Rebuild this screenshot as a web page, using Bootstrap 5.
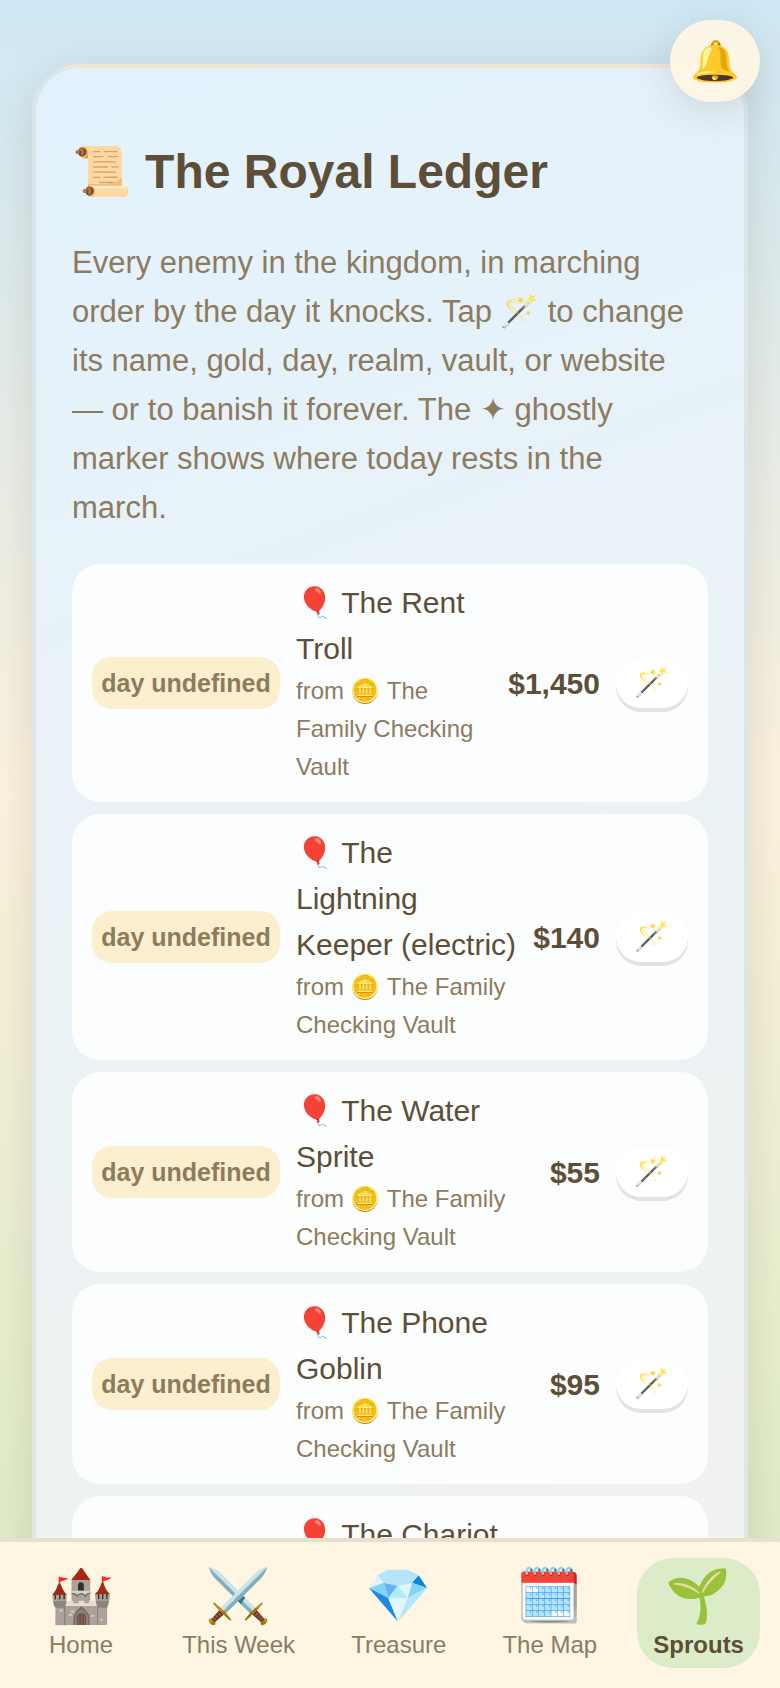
<!DOCTYPE html>
<html lang="en">
<head>
<meta charset="utf-8">
<meta name="viewport" content="width=device-width, initial-scale=1">
<title>The Royal Ledger</title>
<link rel="stylesheet" href="https://cdn.jsdelivr.net/npm/bootstrap@5.3.0/dist/css/bootstrap.min.css">
<style>
:root { --ink: #5d4e37; --ink-soft: #8d7b5f; }
html, body { height: 100%; }
body {
  font-family: "Liberation Sans", "Noto Color Emoji", sans-serif;
  font-size: 30px;
  color: var(--ink);
  background: linear-gradient(180deg, #cfe8f5 0%, #fdf3df 47%, #daecc3 100%) fixed;
}
.realm { height: 100vh; overflow-y: auto; scrollbar-width: none; padding: 64px 32px 180px; }
.realm::-webkit-scrollbar { display: none; }
.ledger {
  min-height: 200vh;
  padding: 66px 36px 36px;
  border: 4px solid rgba(93, 78, 55, .08);
  border-radius: 48px;
  background: linear-gradient(160deg, #e3f2fd, #fff3e0);
  box-shadow: 0 12px 48px rgba(93, 78, 55, .18);
}
.ledger h1 { font-size: 48px; font-weight: 700; line-height: 76px; margin: 0 0 28px; }
.ledger .intro { font-size: 31px; line-height: 49px; color: var(--ink-soft); margin: 0 0 32px; }
.foe-list { gap: 12px; }
.foe { padding: 16px 20px; border-radius: 28px; background: rgba(255, 255, 255, .82); }
.day-tag { min-width: 188px; padding: 0 8px; border-radius: 20px; background: #fbefce; color: var(--ink-soft); font-size: 25px; font-weight: 700; line-height: 52px; white-space: nowrap; text-align: center; }
.foe-name { line-height: 46px; }
.vault { font-size: 24px; line-height: 38px; color: var(--ink-soft); }
.wand { width: 72px; height: 50px; border: 0; border-radius: 28px; background: #fff; box-shadow: 0 4px 0 rgba(0, 0, 0, .1); font-size: 28px; line-height: 50px; padding: 0; text-align: center; }
.bell { top: 20px; right: 20px; width: 90px; height: 82px; border: 0; border-radius: 41px; background: rgba(255, 246, 227, .9); box-shadow: 0 8px 40px rgba(93, 78, 55, .18); font-size: 40px; line-height: 80px; padding: 0; z-index: 20; }
.dock { padding: 16px 20px 20px; border-top: 4px solid #e8dfcc; background: #fef5e2; z-index: 10; }
.dock a { min-width: 122px; height: 110px; padding: 8px 16px; border-radius: 36px; color: var(--ink-soft); font-size: 24px; line-height: 38px; text-decoration: none; text-align: center; }
.dock a.active { background: #dcecc8; color: var(--ink); font-weight: 700; }
.dock .glyph { font-size: 53px; line-height: 60px; font-weight: 400; }
</style>
</head>
<body>
<button type="button" class="bell position-fixed" aria-label="Notifications">🔔</button>

<main class="realm">
  <section class="ledger">
    <h1>📜 The Royal Ledger</h1>
    <p class="intro pe-3">Every enemy in the kingdom, in marching order by the day it knocks. Tap 🪄 to change its name, gold, day, realm, vault, or website — or to banish it forever. The ✦ ghostly marker shows where today rests in the march.</p>
    <ul class="foe-list list-unstyled d-grid mb-0">
      <li class="foe d-flex align-items-center gap-3">
        <span class="day-tag">day undefined</span>
        <div class="flex-grow-1"><div class="foe-name">🎈 The Rent Troll</div><div class="vault">from 🪙 The Family Checking Vault</div></div>
        <strong>$1,450</strong>
        <button type="button" class="wand flex-shrink-0" aria-label="Edit The Rent Troll">🪄</button>
      </li>
      <li class="foe d-flex align-items-center gap-3">
        <span class="day-tag">day undefined</span>
        <div class="flex-grow-1"><div class="foe-name">🎈 The Lightning Keeper (electric)</div><div class="vault">from 🪙 The Family Checking Vault</div></div>
        <strong>$140</strong>
        <button type="button" class="wand flex-shrink-0" aria-label="Edit The Lightning Keeper">🪄</button>
      </li>
      <li class="foe d-flex align-items-center gap-3">
        <span class="day-tag">day undefined</span>
        <div class="flex-grow-1"><div class="foe-name">🎈 The Water Sprite</div><div class="vault">from 🪙 The Family Checking Vault</div></div>
        <strong>$55</strong>
        <button type="button" class="wand flex-shrink-0" aria-label="Edit The Water Sprite">🪄</button>
      </li>
      <li class="foe d-flex align-items-center gap-3">
        <span class="day-tag">day undefined</span>
        <div class="flex-grow-1"><div class="foe-name">🎈 The Phone Goblin</div><div class="vault">from 🪙 The Family Checking Vault</div></div>
        <strong>$95</strong>
        <button type="button" class="wand flex-shrink-0" aria-label="Edit The Phone Goblin">🪄</button>
      </li>
      <li class="foe d-flex align-items-center gap-3">
        <span class="day-tag">day undefined</span>
        <div class="flex-grow-1"><div class="foe-name">🎈 The Chariot Keeper</div><div class="vault">from 🪙 The Family Checking Vault</div></div>
        <strong>$120</strong>
        <button type="button" class="wand flex-shrink-0" aria-label="Edit The Chariot Keeper">🪄</button>
      </li>
    </ul>
  </section>
</main>

<nav class="dock fixed-bottom d-flex justify-content-between" aria-label="Main">
  <a href="#home" class="d-flex flex-column"><span class="glyph">🏰</span>Home</a>
  <a href="#week" class="d-flex flex-column"><span class="glyph">⚔️</span>This Week</a>
  <a href="#treasure" class="d-flex flex-column"><span class="glyph">💎</span>Treasure</a>
  <a href="#map" class="d-flex flex-column"><span class="glyph">🗓️</span>The Map</a>
  <a href="#sprouts" class="d-flex flex-column active" aria-current="page"><span class="glyph">🌱</span>Sprouts</a>
</nav>
<script src="https://cdn.jsdelivr.net/npm/bootstrap@5.3.0/dist/js/bootstrap.bundle.min.js"></script>
</body>
</html>
